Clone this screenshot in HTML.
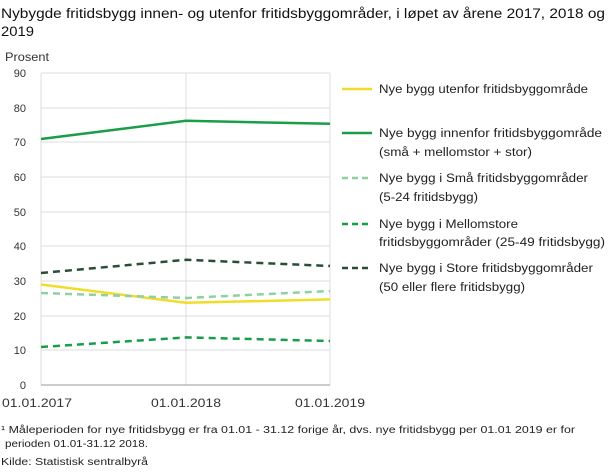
<!DOCTYPE html>
<html><head><meta charset="utf-8"><style>
body{margin:0;background:#fff;width:610px;height:471px;overflow:hidden;font-family:"Liberation Sans",sans-serif;color:#1a1a1a}
svg text{font-family:"Liberation Sans",sans-serif}
</style></head><body>
<svg width="610" height="471" xmlns="http://www.w3.org/2000/svg">
<text x="1" y="18" font-size="13.5" fill="#111" textLength="604" lengthAdjust="spacingAndGlyphs">Nybygde fritidsbygg  innen- og utenfor fritidsbyggområder, i løpet av årene 2017, 2018 og</text>
<text x="1" y="36" font-size="13.5" fill="#111" textLength="33" lengthAdjust="spacingAndGlyphs">2019</text>
<text x="5" y="61" font-size="11.5" fill="#333" textLength="44" lengthAdjust="spacingAndGlyphs">Prosent</text>
<g stroke="#dcdcdc" stroke-width="1">
<line x1="41" y1="73" x2="330" y2="73"/><line x1="41" y1="108" x2="330" y2="108"/><line x1="41" y1="142" x2="330" y2="142"/><line x1="41" y1="177" x2="330" y2="177"/><line x1="41" y1="212" x2="330" y2="212"/><line x1="41" y1="246" x2="330" y2="246"/><line x1="41" y1="281" x2="330" y2="281"/><line x1="41" y1="316" x2="330" y2="316"/><line x1="41" y1="350" x2="330" y2="350"/>
<line x1="41" y1="73" x2="41" y2="385"/><line x1="186" y1="73" x2="186" y2="385"/><line x1="330" y1="73" x2="330" y2="385"/>
</g>
<line x1="41" y1="385" x2="330" y2="385" stroke="#999"/>
<g font-size="11" fill="#333" text-anchor="end">
<text x="26" y="77">90</text><text x="26" y="112">80</text><text x="26" y="146">70</text><text x="26" y="181">60</text><text x="26" y="216">50</text><text x="26" y="250">40</text><text x="26" y="285">30</text><text x="26" y="320">20</text><text x="26" y="354">10</text><text x="26" y="389">0</text>
</g>
<g font-size="11.5" fill="#333">
<text x="2" y="407" textLength="70" lengthAdjust="spacingAndGlyphs">01.01.2017</text><text x="151" y="407" textLength="70" lengthAdjust="spacingAndGlyphs">01.01.2018</text><text x="295" y="407" textLength="70" lengthAdjust="spacingAndGlyphs">01.01.2019</text>
</g>
<g fill="none" stroke-width="2.5">
<polyline points="41,284.5 186,302.8 330,299.4" stroke="#f2dc2a"/>
<polyline points="41,139 186,120.8 330,123.8" stroke="#1a9d49"/>
<polyline points="41,293 186,298 330,291" stroke="#90d0a0" stroke-dasharray="7,5"/>
<polyline points="41,347 186,337.4 330,341" stroke="#1a9d49" stroke-dasharray="7,5"/>
<polyline points="41,273 186,259.8 330,266" stroke="#274e37" stroke-dasharray="7,5"/>
</g>
<g stroke-width="2.5">
<line x1="342" y1="89" x2="372" y2="89" stroke="#f2dc2a"/>
<line x1="342" y1="133" x2="372" y2="133" stroke="#1a9d49"/>
<line x1="342" y1="178" x2="372" y2="178" stroke="#90d0a0" stroke-dasharray="6,4"/>
<line x1="342" y1="224" x2="372" y2="224" stroke="#1a9d49" stroke-dasharray="6,4"/>
<line x1="342" y1="268" x2="372" y2="268" stroke="#274e37" stroke-dasharray="6,4"/>
</g>
<g font-size="11.5" fill="#222">
<text x="379" y="93" textLength="209" lengthAdjust="spacingAndGlyphs">Nye bygg utenfor fritidsbyggområde</text>
<text x="379" y="137" textLength="223" lengthAdjust="spacingAndGlyphs">Nye bygg innenfor fritidsbyggområde</text>
<text x="379" y="156" textLength="153" lengthAdjust="spacingAndGlyphs">(små + mellomstor + stor)</text>
<text x="379" y="182" textLength="209" lengthAdjust="spacingAndGlyphs">Nye bygg i Små fritidsbyggområder</text>
<text x="379" y="201" textLength="99" lengthAdjust="spacingAndGlyphs">(5-24 fritidsbygg)</text>
<text x="379" y="228" textLength="139" lengthAdjust="spacingAndGlyphs">Nye bygg i Mellomstore</text>
<text x="379" y="246" textLength="226" lengthAdjust="spacingAndGlyphs">fritidsbyggområder (25-49 fritidsbygg)</text>
<text x="379" y="272" textLength="214" lengthAdjust="spacingAndGlyphs">Nye bygg i Store fritidsbyggområder</text>
<text x="379" y="291" textLength="146" lengthAdjust="spacingAndGlyphs">(50 eller flere fritidsbygg)</text>
</g>
<g font-size="10" fill="#222">
<text x="1" y="433" textLength="574" lengthAdjust="spacingAndGlyphs">¹ Måleperioden for nye fritidsbygg er fra 01.01 - 31.12 forige år, dvs. nye fritidsbygg per 01.01 2019 er for</text>
<text x="5" y="447" textLength="143" lengthAdjust="spacingAndGlyphs">perioden 01.01-31.12 2018.</text>
<text x="1" y="465" textLength="147" lengthAdjust="spacingAndGlyphs">Kilde: Statistisk sentralbyrå</text>
</g>
</svg>
</body></html>
